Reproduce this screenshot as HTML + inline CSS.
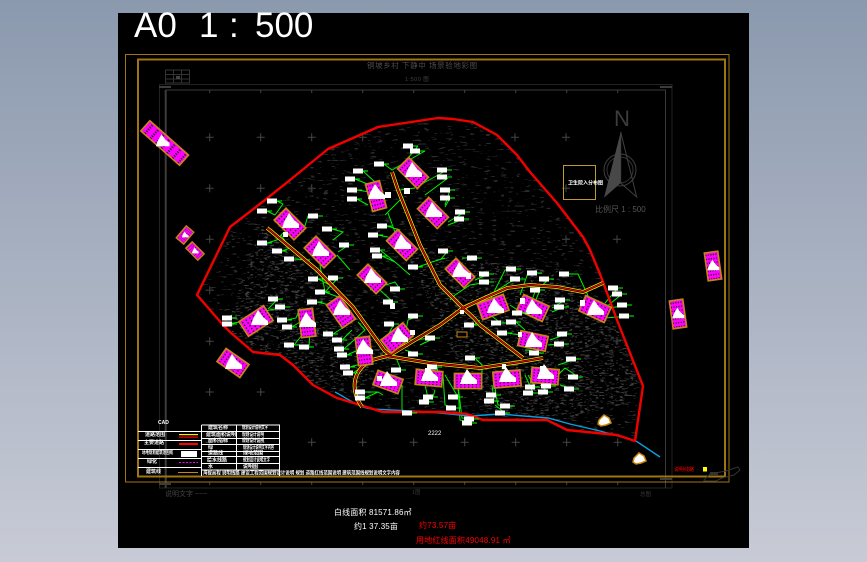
<!DOCTYPE html>
<html lang="zh"><head><meta charset="utf-8"><title>A0 1:500</title>
<style>
html,body{margin:0;padding:0;width:867px;height:562px;overflow:hidden;background:#aab}
svg{display:block}
text{font-family:"Liberation Sans","Noto Sans CJK SC",sans-serif;white-space:pre}
</style></head><body>
<svg width="867" height="562" viewBox="0 0 867 562" xmlns="http://www.w3.org/2000/svg">
<defs>
<linearGradient id="bg" x1="0" y1="0" x2="0" y2="1"><stop offset="0" stop-color="#8b99ae"/><stop offset="1" stop-color="#c8cbd6"/></linearGradient>
<pattern id="dots" width="4" height="3" patternUnits="userSpaceOnUse"><rect width="4" height="3" fill="#f0f"/><rect width="1.300" height="1.300" fill="#111"/></pattern>
<g id="B"><rect x="-14" y="-8" width="28" height="16" fill="#f0f" stroke="#c8860d" stroke-width="1.600" vector-effect="non-scaling-stroke"/><rect x="-13" y="-7" width="26" height="14" fill="url(#dots)"/></g>
<path id="W" d="M-8 6L-6 0L-1-9L4-2L9 2L9 6Z" fill="#fff"/>
<g id="L"><rect x="-5" y="-2.500" width="10" height="5" fill="#fff"/><path d="M5 0h5" stroke="#0f0"/></g>
<path id="R" fill="none" stroke-linejoin="round" d="M267 228L272 232L317 270L353 307L384 350L390 355M392 172L398 190L420 245L440 285L463 308M463 308L480 300L507 288L530 285L557 287L583 292L603 283M463 308L440 325L390 355M463 308C470 315 472 315 480 325L523 358M362 407C350 390 352 370 372 360L387 356L430 363L480 368L520 362L543 358"/>
<g id="X"><path d="M-4 0h8M0-4v8" stroke="#454545" fill="none"/></g>
<clipPath id="site"><path d="M438 118L453 119L473 122L497 135L517 155L530 172L557 203L583 237L590 250L600 274L617 320L643 386L635 441L617 435L567 430L547 420L483 420L467 414L440 412L383 412L360 405L337 398L313 385L293 365L280 355L253 352L230 332L223 325L197 295L230 227L265 200L290 180L328 149L378 127Z"/></clipPath>
<clipPath id="dense"><path d="M262 225L320 270L390 360L350 395L313 385L280 355L253 352L232 332L232 310ZM400 240L470 260L560 270L630 340L640 400L560 420L480 410Z"/></clipPath>
<filter id="n1" x="0" y="0" width="100%" height="100%" color-interpolation-filters="sRGB"><feTurbulence type="fractalNoise" baseFrequency=".13 .55" numOctaves="2" seed="4"/><feColorMatrix values="0 0 0 0 .17 0 0 0 0 .17 0 0 0 0 .17 22 0 0 0 -14.400"/></filter>
<filter id="n2" x="0" y="0" width="100%" height="100%" color-interpolation-filters="sRGB"><feTurbulence type="fractalNoise" baseFrequency=".2 .6" numOctaves="2" seed="9"/><feColorMatrix values="0 0 0 0 .24 0 0 0 0 .24 0 0 0 0 .24 18 0 0 0 -11"/></filter>
</defs>

<rect width="867" height="562" fill="url(#bg)"/>
<rect x="118" y="13" width="631" height="535" fill="#000"/>

<g font-size="35" fill="#fff"><text x="134" y="37">A0</text><text x="199" y="37">1</text><text x="229" y="37">:</text><text x="255" y="37">500</text></g>

<!-- grid frame -->
<g fill="none">
<path d="M159.500 84.500H672V488H159.500Z" stroke="#222"/>
<path d="M166 488V90H665.500V488" stroke="#3a3a3a"/>
<path d="M165.700 90V488" stroke="#3c3c3c" stroke-width="2"/>
<path d="M209.700 90v3M260.700 90v3M311.700 90v3M362.700 90v3M413.700 90v3M464.700 90v3M515.700 90v3M566.700 90v3M617.700 90v3M209.700 482v3M260.700 482v3M311.700 482v3M362.700 482v3M413.700 482v3M464.700 482v3M515.700 482v3M566.700 482v3M617.700 482v3" stroke="#444"/>
<path d="M159 87h12M660 87h12M660 479h12M159 484h12" stroke="#3c3c3c" stroke-width="2"/>
</g>
<path d="M165.500 70h24v13h-24ZM165.500 74.500h24M165.500 79h24M173.500 70v13M181.500 70v13" fill="none" stroke="#333"/>
<rect x="176" y="76" width="4" height="3" fill="#444"/>

<!-- crosses -->
<g>
<use href="#X" x="209.700" y="137.300"/><use href="#X" x="260.700" y="137.300"/><use href="#X" x="311.700" y="137.300"/><use href="#X" x="362.700" y="137.300"/><use href="#X" x="566" y="137.300"/><use href="#X" x="515" y="137.300"/>
<use href="#X" x="209.700" y="188.300"/><use href="#X" x="260.700" y="188.300"/><use href="#X" x="311.700" y="188.300"/><use href="#X" x="566" y="188.300"/>
<use href="#X" x="209.700" y="239.300"/><use href="#X" x="566" y="239.300"/><use href="#X" x="617" y="239.300"/><use href="#X" x="617" y="290.300"/><use href="#X" x="209.700" y="290.300"/>
<use href="#X" x="209.700" y="341.300"/><use href="#X" x="209.700" y="392"/><use href="#X" x="260.700" y="392"/><use href="#X" x="617" y="341"/><use href="#X" x="209.700" y="442.300"/><use href="#X" x="260.700" y="442.300"/>
<use href="#X" x="311.700" y="442.300"/><use href="#X" x="362.700" y="442.300"/><use href="#X" x="413.700" y="442.300"/><use href="#X" x="464.700" y="442.300"/><use href="#X" x="515.700" y="442.300"/><use href="#X" x="566.700" y="442.300"/><use href="#X" x="617.700" y="442.300"/>
</g>

<!-- terrain -->
<g clip-path="url(#site)"><rect x="190" y="110" width="460" height="340" filter="url(#n1)"/></g>
<g clip-path="url(#site)"><g clip-path="url(#dense)"><rect x="190" y="110" width="460" height="340" filter="url(#n2)"/></g></g>

<!-- orange frames -->
<rect x="125.500" y="54.500" width="603.500" height="427.500" fill="none" stroke="#a07410"/>
<rect x="138" y="59.500" width="587" height="417" fill="none" stroke="#a07410" stroke-width="2"/>

<!-- titles -->
<text x="367" y="68" font-size="7.500" fill="#4c4c4c" letter-spacing=".6">铜坡乡村 下静中 场景验地彩图</text>
<text x="405" y="81" font-size="5.500" fill="#444" letter-spacing=".5">1:500 图</text>

<!-- north arrow -->
<g>
<text x="614" y="126" font-size="22" fill="#3c3c3c">N</text>
<circle cx="620" cy="170" r="16" fill="none" stroke="#404040"/>
<circle cx="620" cy="170" r="13" fill="none" stroke="#333"/>
<path d="M620.700 132L604 197.700L620.700 183Z" fill="#484848"/>
<path d="M620.700 132L636.700 197L620.700 183Z" fill="none" stroke="#404040"/>
<text x="595" y="212" font-size="8" fill="#555">比例尺 1 : 500</text>
</g>
<rect x="563.500" y="165.500" width="32" height="34" fill="none" stroke="#c09a30"/>
<text x="568" y="184.500" font-size="5" font-weight="bold" fill="#fff">卫生院入分布图</text>

<!-- green connections -->
<path fill="none" stroke="#00f000" d="M418 146L404 163M425 151L404 163M384 164L392 170L404 163M363 171L376 183M355 179L370 185M357 190L370 192M357 199L368 205M277 201L283 204L275 215M267 211L275 215M267 243L277 240L283 233M282 251L290 248L281 235M294 259L310 260M318 216L308 216L303 232M332 229L343 232L333 240M349 245L338 252M350 270L337 255M387 226L400 230M378 235L388 237M380 250L395 262L410 275M382 256L395 262M418 267L432 262L445 258M448 178L425 195M447 170L420 185M450 190L445 205M450 198L445 207M465 212L448 222M464 219L448 225M400 200L385 215M388 213L396 235M415 188L400 190M338 278L325 292L320 265M318 279L330 285M325 292L338 297M317 302L330 305M400 289L395 282L370 290M393 302L380 290L375 270M278 299L268 309M285 307L260 312M287 320L296 318L300 308M292 327L300 322M294 345L302 335M309 347L310 330M333 334L352 322M342 340L352 330M344 349L365 330L358 322M347 355L358 350L358 340M350 367L368 362M353 373L365 365M394 324L388 335M418 316L408 320L405 335M435 338L410 340M418 354L405 350M401 370L395 355M365 392L378 392L383 395M365 398L378 392M433 397L435 390M429 402L425 385M412 413L402 410L402 385M437 367L438 373M227 318L232 315M227 324L240 322M448 251L440 260M477 258L462 258M489 274L475 280M489 282L470 285L455 295L450 300M516 269L505 270L490 300M520 279L510 282L490 295M537 273L528 273L520 295M549 279L535 292L532 300M569 274L578 274L590 300M540 290L535 302M565 300L552 308M564 307L552 312M618 288L605 303M622 294L605 308M627 305L610 308M629 316L605 318M522 313L510 305M501 323L490 315M516 322L525 330M474 325L480 320M507 333L520 335M567 334L550 340M564 344L548 345M539 353L530 350L525 350M475 358L482 365L482 380M576 359L558 365M578 377L565 368L558 375M574 389L560 385M551 386L545 380M535 387L528 375M533 393L525 375M548 392L540 385M496 395L495 385M494 401L492 385M510 406L498 405L495 390M505 413L495 405M458 397L445 375M456 408L445 405L443 375M474 419L462 418L458 385M472 423L460 420L458 385M435 338L420 345"/>

<!-- river -->
<path d="M335 392C350 400 360 408 372 409L430 412L470 416L500 414L548 418L570 424L600 431L636 441L648 449L660 457" fill="none" stroke="#0a9fe0" stroke-width="1.400"/>

<!-- red boundary -->
<path d="M438 118L453 119L473 122L497 135L517 155L530 172L557 203L583 237L590 250L600 274L617 320L643 386L635 441L617 435L567 430L547 420L483 420L467 414L440 412L383 412L360 405L337 398L313 385L293 365L280 355L253 352L230 332L223 325L197 295L230 227L265 200L290 180L328 149L378 127Z" fill="none" stroke="#f20000" stroke-width="2.400" stroke-linejoin="round"/>

<!-- roads -->
<use href="#R" stroke="#ffe600" stroke-width="3.800"/>
<use href="#R" stroke="#000" stroke-width="2.200"/>
<use href="#R" stroke="#f00" stroke-width="1"/>

<!-- buildings -->
<g transform="translate(164.700 143)"><use href="#B" transform="rotate(41.600) scale(1.850 .85)"/><use href="#W" transform="scale(.8)" x="-3" y="-2"/></g>
<g transform="translate(185 235)"><use href="#B" transform="rotate(-50) scale(.55 .6)"/><use href="#W" transform="scale(.4)"/></g>
<g transform="translate(195 251)"><use href="#B" transform="rotate(45) scale(.6 .55)"/><use href="#W" transform="scale(.4)"/></g>
<g transform="translate(713 266)"><use href="#B" transform="rotate(82) scale(1 .85)"/><use href="#W" transform="scale(.7)"/></g>
<g transform="translate(678 314)"><use href="#B" transform="rotate(82) scale(1 .85)"/><use href="#W" transform="scale(.7)"/></g>
<g transform="translate(233 363)"><use href="#B" transform="rotate(35) scale(1 1)"/><use href="#W"/></g>
<g transform="translate(256 321)"><use href="#B" transform="rotate(-33) scale(1.050 1.100)"/><use href="#W" x="3" y="-2"/></g>
<g transform="translate(307 323)"><use href="#B" transform="rotate(83) scale(1 .9)"/><use href="#W" y="-2"/></g>
<g transform="translate(341 312)"><use href="#B" transform="rotate(55) scale(1 1)"/><use href="#W" y="-3"/></g>
<g transform="translate(364 351)"><use href="#B" transform="rotate(83) scale(1 .9)"/><use href="#W" y="-3"/></g>
<g transform="translate(397 338)"><use href="#B" transform="rotate(-38) scale(1 1.050)"/><use href="#W" x="2" y="-2"/></g>
<g transform="translate(388 382)"><use href="#B" transform="rotate(20) scale(.95 .95)"/><use href="#W" y="-2"/></g>
<g transform="translate(429 378)"><use href="#B" transform="rotate(5) scale(.95 .95)"/><use href="#W" y="-3"/></g>
<g transform="translate(468 381)"><use href="#B" transform="scale(.97 .95)"/><use href="#W" y="-3"/></g>
<g transform="translate(507 379)"><use href="#B" transform="rotate(-5) scale(.97 1)"/><use href="#W" y="-3"/></g>
<g transform="translate(545 376)"><use href="#B" transform="rotate(5) scale(.97 .95)"/><use href="#W" y="-3"/></g>
<g transform="translate(533 341)"><use href="#B" transform="rotate(12) scale(1 .95)"/><use href="#W"/></g>
<g transform="translate(533 308)"><use href="#B" transform="rotate(25) scale(1 1.050)"/><use href="#W"/></g>
<g transform="translate(493 307)"><use href="#B" transform="rotate(-20) scale(1 1.050)"/><use href="#W" x="2"/></g>
<g transform="translate(595 309)"><use href="#B" transform="rotate(25) scale(1 1.050)"/><use href="#W"/></g>
<g transform="translate(460 273)"><use href="#B" transform="rotate(45) scale(.95 .95)"/><use href="#W" y="-2"/></g>
<g transform="translate(372 279)"><use href="#B" transform="rotate(45) scale(.95 .95)"/><use href="#W" y="-2"/></g>
<g transform="translate(402 245)"><use href="#B" transform="rotate(45)"/><use href="#W" y="-2"/></g>
<g transform="translate(433 213)"><use href="#B" transform="rotate(45)"/><use href="#W" y="-2"/></g>
<g transform="translate(413 173)"><use href="#B" transform="rotate(45)"/><use href="#W" y="-2"/></g>
<g transform="translate(376 196)"><use href="#B" transform="rotate(75) scale(1 .9)"/><use href="#W" y="-3"/></g>
<g transform="translate(290 224)"><use href="#B" transform="rotate(45) scale(1 1.050)"/><use href="#W" y="-2"/></g>
<g transform="translate(320 252)"><use href="#B" transform="rotate(45) scale(1 1.050)"/><use href="#W" y="-2"/></g>
<path d="M599 420l5-5 5 3 2 5-5 2-5 1-3-2ZM634 458l5-5 5 3 2 5-5 2-5 1-3-2Z" fill="#fff" stroke="#c8860d" stroke-width="1.500"/>
<rect x="457" y="332" width="10" height="5" fill="#000" stroke="#c8860d"/>

<!-- labels -->
<g>
<use href="#L" x="408" y="146"/><use href="#L" x="415" y="151"/><use href="#L" x="379" y="164"/><use href="#L" x="358" y="171"/><use href="#L" x="350" y="179"/><use href="#L" x="352" y="190"/><use href="#L" x="352" y="199"/><use href="#L" x="272" y="201"/><use href="#L" x="262" y="211"/><use href="#L" x="262" y="243"/><use href="#L" x="277" y="251"/><use href="#L" x="289" y="259"/><use href="#L" x="313" y="216"/><use href="#L" x="327" y="229"/><use href="#L" x="344" y="245"/><use href="#L" x="382" y="226"/><use href="#L" x="373" y="235"/><use href="#L" x="375" y="250"/><use href="#L" x="377" y="256"/><use href="#L" x="413" y="267"/>
<use href="#L" x="442" y="170"/><use href="#L" x="442" y="177"/><use href="#L" x="445" y="190"/><use href="#L" x="445" y="198"/><use href="#L" x="460" y="212"/><use href="#L" x="459" y="219"/>
<use href="#L" x="333" y="278"/><use href="#L" x="313" y="279"/><use href="#L" x="320" y="292"/><use href="#L" x="312" y="302"/><use href="#L" x="395" y="289"/><use href="#L" x="388" y="302"/><use href="#L" x="273" y="299"/><use href="#L" x="280" y="307"/><use href="#L" x="282" y="320"/><use href="#L" x="287" y="327"/><use href="#L" x="289" y="345"/><use href="#L" x="304" y="347"/><use href="#L" x="227" y="318"/><use href="#L" x="227" y="324"/><use href="#L" x="328" y="334"/><use href="#L" x="337" y="340"/><use href="#L" x="339" y="349"/><use href="#L" x="342" y="355"/><use href="#L" x="345" y="367"/><use href="#L" x="348" y="373"/><use href="#L" x="389" y="324"/><use href="#L" x="413" y="316"/><use href="#L" x="430" y="338"/><use href="#L" x="413" y="354"/><use href="#L" x="396" y="370"/><use href="#L" x="360" y="392"/><use href="#L" x="360" y="398"/><use href="#L" x="428" y="397"/><use href="#L" x="424" y="402"/><use href="#L" x="407" y="413"/><use href="#L" x="432" y="367"/>
<use href="#L" x="443" y="251"/><use href="#L" x="472" y="258"/><use href="#L" x="484" y="274"/><use href="#L" x="484" y="282"/><use href="#L" x="511" y="269"/><use href="#L" x="515" y="279"/><use href="#L" x="532" y="273"/><use href="#L" x="544" y="279"/><use href="#L" x="564" y="274"/><use href="#L" x="535" y="290"/><use href="#L" x="560" y="300"/><use href="#L" x="559" y="307"/><use href="#L" x="613" y="288"/><use href="#L" x="617" y="294"/><use href="#L" x="622" y="305"/><use href="#L" x="624" y="316"/><use href="#L" x="517" y="313"/><use href="#L" x="496" y="323"/><use href="#L" x="511" y="322"/><use href="#L" x="469" y="325"/><use href="#L" x="502" y="333"/><use href="#L" x="562" y="334"/><use href="#L" x="559" y="344"/><use href="#L" x="534" y="353"/><use href="#L" x="470" y="358"/><use href="#L" x="571" y="359"/><use href="#L" x="573" y="377"/><use href="#L" x="569" y="389"/><use href="#L" x="546" y="386"/><use href="#L" x="530" y="387"/><use href="#L" x="528" y="393"/><use href="#L" x="543" y="392"/><use href="#L" x="491" y="395"/><use href="#L" x="489" y="401"/><use href="#L" x="505" y="406"/><use href="#L" x="500" y="413"/><use href="#L" x="453" y="397"/><use href="#L" x="451" y="408"/><use href="#L" x="469" y="419"/><use href="#L" x="467" y="423"/>
</g>
<!-- white node specks -->
<path fill="#fff" d="M283 232h5v5h-5ZM385 192h6v6h-6ZM404 188h6v6h-6ZM390 303h5v6h-5ZM410 330h5v5h-5ZM466 273h5v6h-5ZM362 345h5v5h-5ZM377 376h5v5h-5ZM425 368h4v5h-4ZM520 298h5v6h-5ZM580 300h5v6h-5ZM540 366h6v6h-6ZM502 364h4v5h-4ZM518 332h4v5h-4ZM460 310h4v4h-4Z"/>
<text x="428" y="435" font-size="6" fill="#fff">2222</text>

<!-- legend -->
<g fill="none" stroke="#fff">
<path d="M138 431.500H201M138 440.500H201M138 449.500H201M138 458.500H201M138 467.500H201"/>
<path d="M201.500 425H279.500V476M201.500 425V476M201.500 431.500H279.500M201.500 438.500H279.500M201.500 444.500H279.500M201.500 451.500H279.500M201.500 456.500H279.500M201.500 463.500H279.500M201.500 470H279.500M236.500 425V470"/>
</g>
<rect x="179" y="434" width="19" height="1.200" fill="#ffe600"/><rect x="179" y="436.500" width="19" height="1.200" fill="#f00"/>
<rect x="179" y="443" width="19" height="2" fill="#f00"/>
<rect x="181" y="451" width="16" height="6" fill="#fff"/>
<path d="M179 462.500h19" stroke="#f0f" stroke-dasharray="2 1.500"/>
<path d="M178 472.500h20" stroke="#c8860d"/>
<g fill="#fff" font-size="5" font-weight="bold">
<text x="158" y="424" font-size="5">CAD</text>
<text x="145" y="436">道路范围</text>
<text x="144" y="444">主要道路</text>
<text x="142" y="454" textLength="31" lengthAdjust="spacingAndGlyphs">场地规划建筑范围线</text>
<text x="147" y="463">绿化</text>
<text x="146" y="473">建筑线</text>
<text x="208" y="429">建筑名称</text><text x="242" y="429" textLength="26" lengthAdjust="spacingAndGlyphs">规划设计说明文字</text>
<text x="206" y="436">建筑面积说明</text><text x="242" y="436" textLength="22" lengthAdjust="spacingAndGlyphs">规划设计说明</text>
<text x="208" y="442">面积指标</text><text x="242" y="442" textLength="22" lengthAdjust="spacingAndGlyphs">规划设计说明</text>
<text x="208" y="449">绿</text><text x="243" y="449" textLength="31" lengthAdjust="spacingAndGlyphs">规划设计说明文字内容</text>
<text x="208" y="454.500">道路线</text><text x="243" y="454.500">绿地范围</text>
<text x="207" y="461.500">给水线路</text><text x="243" y="461.500" textLength="27" lengthAdjust="spacingAndGlyphs">规划设计说明文字</text>
<text x="208" y="468">水</text><text x="243" y="468">说明图</text>
<text x="203" y="474.500" textLength="197" lengthAdjust="spacingAndGlyphs">海拔高程 说明线路 建设工程范围规划设计说明 规划 道路红线范围说明 建筑范围线规划说明文字内容</text>
</g>

<!-- bottom misc -->
<text x="165" y="496" font-size="7" fill="#444">说明文字 ~~~</text>
<text x="412" y="494" font-size="5.500" fill="#3a3a3a">1图</text>
<text x="640" y="496" font-size="5.500" fill="#3a3a3a">总图</text>
<text x="674" y="471" font-size="5" fill="#f00">说明线路</text>
<rect x="703" y="467" width="4" height="4.500" fill="#ff0"/>
<path d="M704 480l6-6 16-3 12-4 2 3-6 5-12 3-6 3-12 0Z" fill="none" stroke="#333"/>
<rect x="710" y="472" width="8" height="3" fill="#333"/>

<!-- areas -->
<g font-size="8" fill="#fff" letter-spacing=".15">
<text x="334" y="515">白线面积 81571.86㎡</text>
<text x="354" y="529">约1 37.35亩</text>
</g>
<g font-size="8" fill="#f00" letter-spacing=".2">
<text x="419" y="528">约73.57亩</text>
<text x="416" y="543">用地红线面积49048.91 ㎡</text>
</g>
</svg>
</body></html>
